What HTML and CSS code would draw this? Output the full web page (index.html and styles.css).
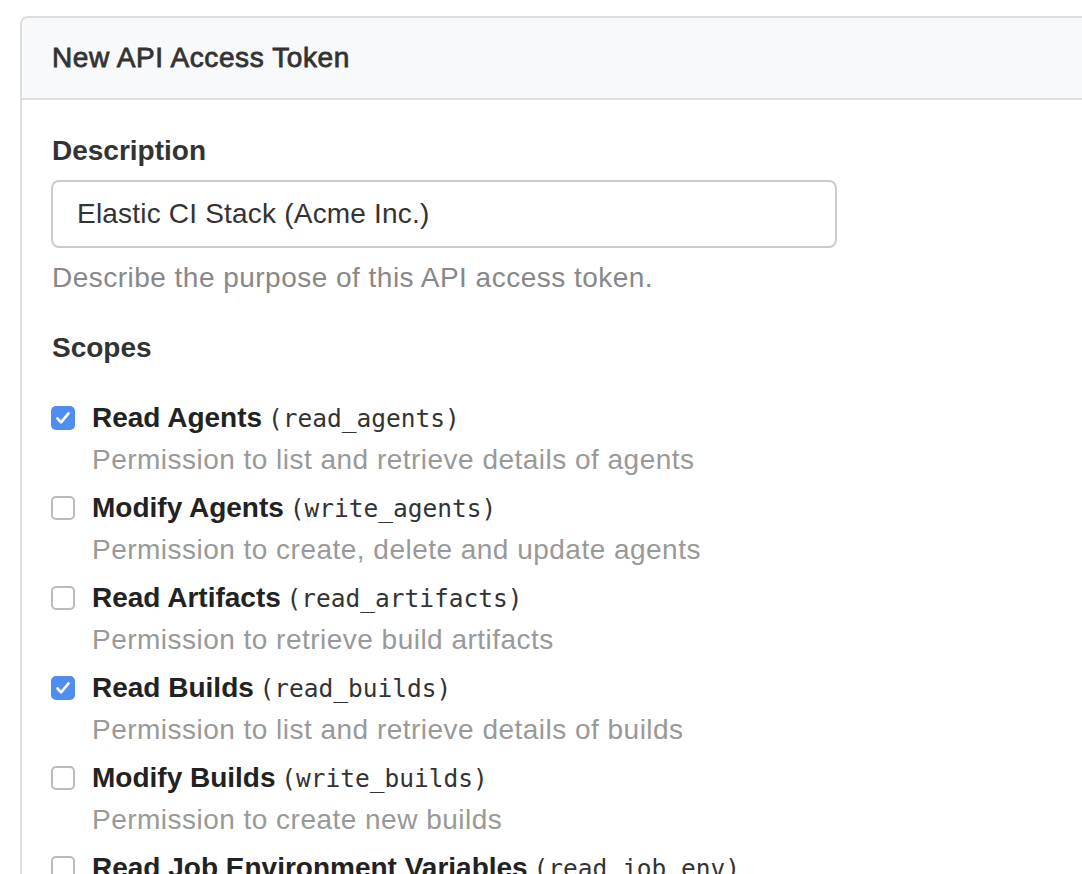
FILE: index.html
```html
<!DOCTYPE html>
<html lang="en">
<head>
<meta charset="utf-8">
<title>New API Access Token</title>
<link rel="stylesheet" href="styles.css">
</head>
<body>
<div class="page">
  <section class="panel">
    <header class="panel-header">New API Access Token</header>
    <div class="panel-body">
      <label class="field-label" for="desc">Description</label>
      <input id="desc" class="text-input" type="text" value="Elastic CI Stack (Acme Inc.)">
      <p class="hint">Describe the purpose of this API access token.</p>

      <h3 class="field-label scopes-title">Scopes</h3>
      <ul class="scopes">
        <li class="scope">
          <span class="box checked"><svg viewBox="0 0 24 24" width="24" height="24"><path d="M6.5 12.5l3.6 3.8 7.4-9" fill="none" stroke="#fff" stroke-width="2.6" stroke-linecap="round" stroke-linejoin="round"/></svg></span>
          <div class="scope-text">
            <div class="scope-name"><strong>Read Agents</strong> <code>(read_agents)</code></div>
            <div class="scope-desc">Permission to list and retrieve details of agents</div>
          </div>
        </li>
        <li class="scope">
          <span class="box"></span>
          <div class="scope-text">
            <div class="scope-name"><strong>Modify Agents</strong> <code>(write_agents)</code></div>
            <div class="scope-desc">Permission to create, delete and update agents</div>
          </div>
        </li>
        <li class="scope">
          <span class="box"></span>
          <div class="scope-text">
            <div class="scope-name"><strong>Read Artifacts</strong> <code>(read_artifacts)</code></div>
            <div class="scope-desc">Permission to retrieve build artifacts</div>
          </div>
        </li>
        <li class="scope">
          <span class="box checked"><svg viewBox="0 0 24 24" width="24" height="24"><path d="M6.5 12.5l3.6 3.8 7.4-9" fill="none" stroke="#fff" stroke-width="2.6" stroke-linecap="round" stroke-linejoin="round"/></svg></span>
          <div class="scope-text">
            <div class="scope-name"><strong>Read Builds</strong> <code>(read_builds)</code></div>
            <div class="scope-desc">Permission to list and retrieve details of builds</div>
          </div>
        </li>
        <li class="scope">
          <span class="box"></span>
          <div class="scope-text">
            <div class="scope-name"><strong>Modify Builds</strong> <code>(write_builds)</code></div>
            <div class="scope-desc">Permission to create new builds</div>
          </div>
        </li>
        <li class="scope">
          <span class="box"></span>
          <div class="scope-text">
            <div class="scope-name"><strong>Read Job Environment Variables</strong> <code>(read_job_env)</code></div>
            <div class="scope-desc">Permission to read job environment variables</div>
          </div>
        </li>
      </ul>
    </div>
  </section>
</div>
</body>
</html>
```

FILE: styles.css
```css
html, body {
  margin: 0;
  padding: 0;
  background: #fff;
  overflow: hidden;
}

body {
  font-family: "Liberation Sans", Arial, Helvetica, sans-serif;
  font-size: 28px;
  line-height: 42px;
  color: #333;
}

.page {
  padding: 16px 0 0 20px;
  width: 1300px;
}

.panel {
  border: 2px solid #ddd;
  border-radius: 8px;
  width: 1200px;
}

.panel-header {
  background: #f8f9fa;
  border-bottom: 2px solid #ddd;
  border-radius: 6px 6px 0 0;
  padding: 19px 30px;
  font-size: 28px;
  letter-spacing: 0.6px;
  -webkit-text-stroke: 0.8px #333;
  color: #333;
}

.panel-body {
  padding: 30px 30px 0;
}

.field-label {
  display: block;
  margin: 0 0 8px;
  font-size: 28px;
  font-weight: bold;
  color: #333;
}

.text-input {
  display: block;
  box-sizing: border-box;
  width: 786px;
  height: 68px;
  margin: 0 0 0 -1px;
  padding: 0 24px 0 24px;
  border: 2px solid #ccc;
  border-radius: 8px;
  font-family: inherit;
  font-size: 28px;
  letter-spacing: 0.2px;
  color: #333;
  background: #fff;
  outline: none;
}

.hint {
  margin: 9px 0 0;
  color: #888;
  letter-spacing: 0.48px;
}

.scopes-title {
  margin: 28px 0 0;
}

.scopes {
  list-style: none;
  margin: 28px 0 0;
  padding: 0;
}

.scope {
  display: flex;
  align-items: flex-start;
  gap: 17px;
  margin-bottom: 6px;
}

.box {
  flex: none;
  box-sizing: border-box;
  width: 24px;
  height: 24px;
  margin: 9px 0 0 -1px;
  border: 2px solid #bbb;
  border-radius: 5px;
  background: #fff;
}

.box.checked {
  border: none;
  background: #4d8ef0;
}

.box svg {
  display: block;
}

.scope-name {
  height: 42px;
}

.scope-name strong {
  font-weight: bold;
  color: #222;
}

.scope-name code {
  font-family: "DejaVu Sans Mono", Menlo, monospace;
  font-size: 24.5px;
  line-height: 1;
  margin-left: -2px;
  color: #333;
}

.scope-desc {
  color: #999;
  letter-spacing: 0.48px;
}
```
